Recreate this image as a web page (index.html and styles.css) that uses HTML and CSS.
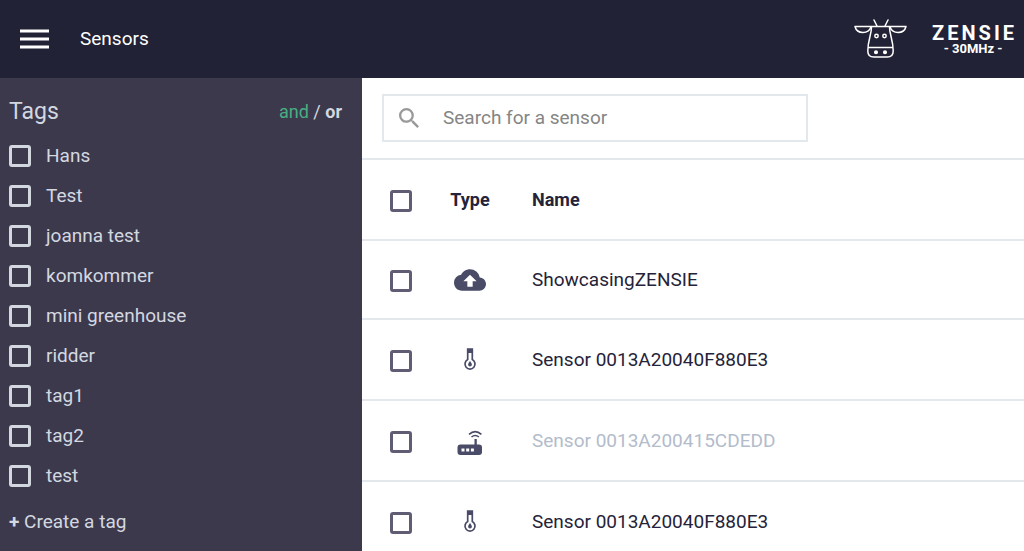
FILE: index.html
```html
<!DOCTYPE html>
<html lang="en">
<head>
<meta charset="utf-8">
<meta name="viewport" content="width=device-width, initial-scale=1">
<title>Sensors</title>
<link rel="stylesheet" href="styles.css">
</head>
<body>
<svg class="sprite" aria-hidden="true">
  <symbol id="thermometer" viewBox="0 0 14 24">
    <path d="M4.700 1v10.600a5 5 0 1 0 4.600 0V1z" fill="none" stroke="currentColor" stroke-width="1.700"/>
    <path d="M4 1h6v4H4zM7 13c1 1.500 1.900 2.500 1.900 3.600a1.900 1.900 0 0 1-3.800 0C5.100 15.500 6 14.500 7 13z" fill="currentColor"/>
  </symbol>
</svg>
<header class="topbar">
  <button class="menu" type="button" aria-label="Menu">
    <svg width="29" height="20" viewBox="0 0 29 20"><path d="M0 2h29M0 10h29M0 18h29" stroke="currentColor" stroke-width="3"/></svg>
  </button>
  <h1 class="page-title">Sensors</h1>
  <a class="brand" href="#">
    <svg class="cow" width="54" height="40" viewBox="0 0 54 40" fill="none" stroke="currentColor" stroke-width="1.500" stroke-linejoin="round" stroke-linecap="round">
      <path d="M1 7.500h51M20 1l3 6M34 1l-3 6M1 7.500c1 4 4 6 8 6 4 0 6.500-1.500 8-5.500M52 7.500c-1 4-4 6-8 6-4 0-6.500-1.500-8-5.500"/>
      <path d="M17.500 8c0 8-3.700 13-3.700 24 0 4 2 6 6 6h13.400c4 0 6-2 6-6 0-11-3.700-16-3.700-24M14.500 28.500h24"/>
      <circle cx="22.500" cy="17" r="1.700"/><circle cx="30.500" cy="17" r="1.700"/>
      <circle cx="22" cy="33.200" r="1.300" fill="currentColor"/><circle cx="31" cy="33.200" r="1.300" fill="currentColor"/>
    </svg>
    <span class="wordmark"><strong class="brand-name">ZENSIE</strong><span class="brand-sub">- 30MHz -</span></span>
  </a>
</header>
<div class="layout">
  <aside class="sidebar">
    <div class="tags-head">
      <h2 class="tags-title">Tags</h2>
      <div class="mode"><button class="mode-option active" type="button">and</button> / <button class="mode-option bold" type="button">or</button></div>
    </div>
    <ul class="tags">
      <li><label class="tag"><input class="check" type="checkbox">Hans</label></li>
      <li><label class="tag"><input class="check" type="checkbox">Test</label></li>
      <li><label class="tag"><input class="check" type="checkbox">joanna test</label></li>
      <li><label class="tag"><input class="check" type="checkbox">komkommer</label></li>
      <li><label class="tag"><input class="check" type="checkbox">mini greenhouse</label></li>
      <li><label class="tag"><input class="check" type="checkbox">ridder</label></li>
      <li><label class="tag"><input class="check" type="checkbox">tag1</label></li>
      <li><label class="tag"><input class="check" type="checkbox">tag2</label></li>
      <li><label class="tag"><input class="check" type="checkbox">test</label></li>
    </ul>
    <button class="create" type="button"><b>+</b> Create a tag</button>
  </aside>
  <main class="content">
    <div class="toolbar">
      <label class="search">
        <svg width="20" height="20" viewBox="3 3 17.500 17.500" fill="currentColor" aria-hidden="true"><path d="M15.500 14h-.79l-.28-.27A6.470 6.470 0 0 0 16 9.500 6.500 6.500 0 1 0 9.500 16c1.610 0 3.090-.59 4.230-1.570l.27.28v.79l5 4.990L20.490 19l-4.990-5zm-6 0a4.500 4.500 0 1 1 0-9 4.500 4.500 0 0 1 0 9z"/></svg>
        <input class="search-input" type="text" placeholder="Search for a sensor" aria-label="Search for a sensor">
      </label>
    </div>
    <table class="sensors">
      <thead>
        <tr><th class="col-check"><input class="check" type="checkbox" aria-label="Select all"></th><th class="col-type">Type</th><th class="col-name">Name</th></tr>
      </thead>
      <tbody>
        <tr class="cloud">
          <td class="col-check"><input class="check" type="checkbox" aria-label="Select ShowcasingZENSIE"></td>
          <td class="col-type"><svg width="32" height="22" viewBox="0 4 24 16" fill="currentColor" role="img" aria-label="Cloud"><path d="M19.350 10.040A7.490 7.490 0 0 0 12 4C9.110 4 6.600 5.640 5.350 8.040A5.994 5.994 0 0 0 0 14c0 3.310 2.690 6 6 6h13c2.760 0 5-2.240 5-5 0-2.640-2.050-4.780-4.650-4.960zM14 13v4h-4v-4H7l5-5 5 5h-3z"/></svg></td>
          <td class="col-name">ShowcasingZENSIE</td>
        </tr>
        <tr>
          <td class="col-check"><input class="check" type="checkbox" aria-label="Select sensor"></td>
          <td class="col-type"><svg width="14" height="24" role="img" aria-label="Thermometer"><use href="#thermometer"/></svg></td>
          <td class="col-name">Sensor 0013A20040F880E3</td>
        </tr>
        <tr class="inactive">
          <td class="col-check"><input class="check" type="checkbox" aria-label="Select sensor"></td>
          <td class="col-type"><svg width="26" height="26" viewBox="0 0 26 26" role="img" aria-label="Gateway"><path fill="currentColor" fill-rule="evenodd" d="M3.500 14.500h14V9h2.300v5.500H22a3 3 0 0 1 3 3V22a3 3 0 0 1-3 3H3.500a3 3 0 0 1-3-3v-4.500a3 3 0 0 1 3-3zm1 4v3h3v-3zm4.700 0v3h3v-3zm4.700 0v3h3v-3z"/><path d="M12 4.300q6.200-5.500 12.400 0M14.500 7q3.700-3 7.400 0" fill="none" stroke="currentColor" stroke-width="1.600"/></svg></td>
          <td class="col-name">Sensor 0013A200415CDEDD</td>
        </tr>
        <tr>
          <td class="col-check"><input class="check" type="checkbox" aria-label="Select sensor"></td>
          <td class="col-type"><svg width="14" height="24" role="img" aria-label="Thermometer"><use href="#thermometer"/></svg></td>
          <td class="col-name">Sensor 0013A20040F880E3</td>
        </tr>
      </tbody>
    </table>
  </main>
</div>
</body>
</html>
```

FILE: styles.css
```css
* { box-sizing: border-box; }

body {
  margin: 0;
  height: 100vh;
  display: flex;
  flex-direction: column;
  overflow: hidden;
  font: 19px/24px Roboto, "Liberation Sans", sans-serif;
  color: #25233a;
  background: #fff;
}

button { padding: 0; border: 0; background: none; color: inherit; font: inherit; cursor: pointer; }

.sprite { display: none; }

.topbar {
  flex: none;
  display: flex;
  align-items: center;
  padding: 19px 10px 19px 20px;
  background: #222236;
  color: #fff;
}
.menu { display: flex; margin-right: 31px; }
.page-title { margin: 0; font-size: 19px; font-weight: 400; }
.brand { display: flex; align-items: center; gap: 24px; margin-left: auto; color: inherit; text-decoration: none; }
.wordmark { display: flex; flex-direction: column; align-items: center; padding-top: 2px; }
.brand-name { font-size: 20px; line-height: 18px; font-weight: 700; letter-spacing: 3px; margin-right: -3px; }
.brand-sub { font-size: 13px; line-height: 14px; font-weight: 700; }
.cow { display: block; }

.layout { flex: 1; min-height: 0; display: flex; }

.sidebar { flex: 0 0 362px; padding: 18px 20px 0 9px; background: #3d394d; color: #d3d8e0; }
.tags-head { display: flex; align-items: center; justify-content: space-between; height: 32px; }
.tags-title { margin: 0; font-size: 23px; font-weight: 400; }
.mode { font-size: 18px; }
.mode-option.active { color: #48ae82; }
.mode-option.bold { font-weight: 700; }
.tags { list-style: none; margin: 8px 0 14px; padding: 0; }
.tag { display: flex; align-items: center; gap: 15px; height: 40px; }

.check {
  appearance: none;
  display: block;
  flex: none;
  width: 22px;
  height: 22px;
  margin: 0;
  border: 3px solid currentColor;
  border-radius: 3px;
  color: inherit;
}

.content { flex: 1; min-width: 0; overflow: hidden; }
.toolbar { padding: 16px 20px; border-bottom: 2px solid #e3e8ed; }
.search {
  display: flex;
  align-items: center;
  gap: 24px;
  max-width: 426px;
  height: 48px;
  padding: 0 15px;
  border: 2px solid #e3e8ed;
  color: #999;
}
.search-input { flex: 1; min-width: 0; padding: 0; border: 0; outline: 0; font: inherit; }
.search-input::placeholder { color: #858585; opacity: 1; }

.sensors { width: 100%; border-spacing: 0; }
.sensors th, .sensors td { height: 81px; padding: 0; border-bottom: 2px solid #e3e8ed; text-align: left; }
.sensors .cloud td { height: 79px; }
.sensors th { font-size: 18px; font-weight: 700; }
.sensors .col-check { width: 67px; padding: 2px 0 0 28px; }
.sensors .col-type { width: 82px; text-align: center; }
.sensors .col-name { padding-left: 21px; }
.sensors .check { color: #5f5d74; }
.sensors svg { display: block; margin: 0 auto; color: #494b67; }
.inactive .col-type { padding-top: 4px; }
.inactive { color: #b3bccb; }
```
